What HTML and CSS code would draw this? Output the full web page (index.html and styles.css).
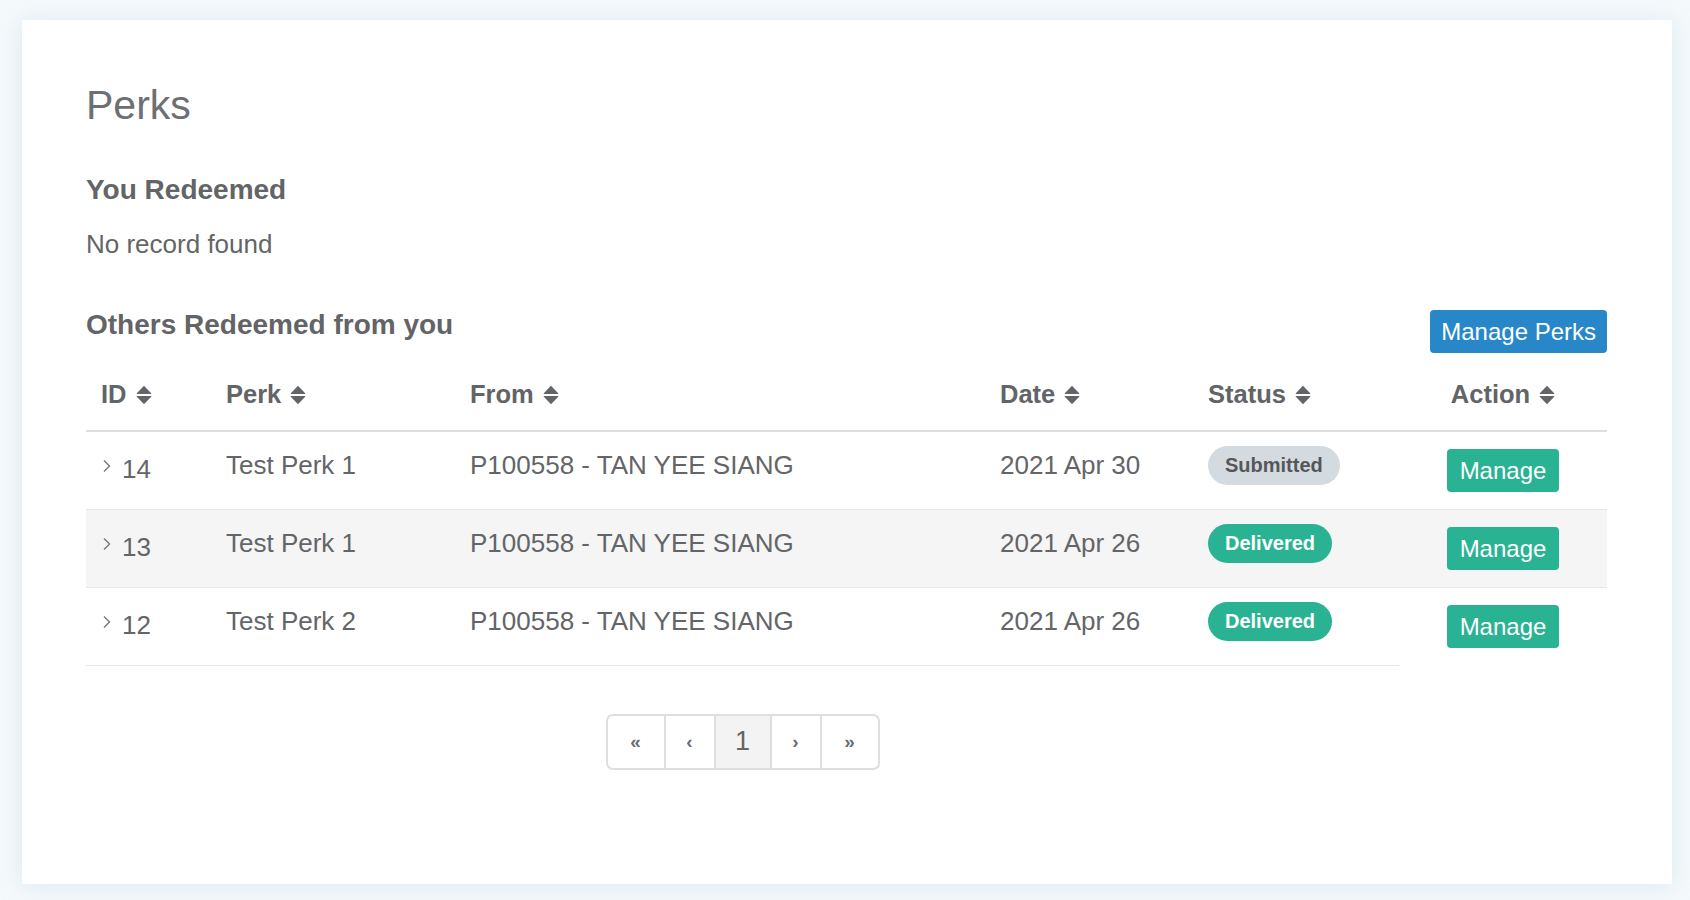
FILE: index.html
```html
<!DOCTYPE html>
<html lang="en">
<head>
<meta charset="utf-8">
<title>Perks</title>
<link rel="stylesheet" href="styles.css">
</head>
<body>
<div class="card">
  <h1 class="page-title">Perks</h1>

  <h4 class="section-title">You Redeemed</h4>
  <p class="empty">No record found</p>

  <div class="section-bar">
    <h4 class="section-title">Others Redeemed from you</h4>
    <button class="btn btn-blue">Manage Perks</button>
  </div>

  <table class="perk-table">
    <colgroup>
      <col class="c-id"><col class="c-perk"><col class="c-from"><col class="c-date"><col class="c-status"><col class="c-action">
    </colgroup>
    <thead>
      <tr>
        <th>ID<svg class="sort" viewBox="0 0 16 20"><path d="M8 0.8 L15.2 8.2 Q15.6 8.9 14.8 8.9 H1.2 Q0.4 8.9 0.8 8.2 Z"/><path d="M1.2 11.1 H14.8 Q15.6 11.1 15.2 11.8 L8 19.2 L0.8 11.8 Q0.4 11.1 1.2 11.1 Z"/></svg></th>
        <th>Perk<svg class="sort" viewBox="0 0 16 20"><path d="M8 0.8 L15.2 8.2 Q15.6 8.9 14.8 8.9 H1.2 Q0.4 8.9 0.8 8.2 Z"/><path d="M1.2 11.1 H14.8 Q15.6 11.1 15.2 11.8 L8 19.2 L0.8 11.8 Q0.4 11.1 1.2 11.1 Z"/></svg></th>
        <th>From<svg class="sort" viewBox="0 0 16 20"><path d="M8 0.8 L15.2 8.2 Q15.6 8.9 14.8 8.9 H1.2 Q0.4 8.9 0.8 8.2 Z"/><path d="M1.2 11.1 H14.8 Q15.6 11.1 15.2 11.8 L8 19.2 L0.8 11.8 Q0.4 11.1 1.2 11.1 Z"/></svg></th>
        <th>Date<svg class="sort" viewBox="0 0 16 20"><path d="M8 0.8 L15.2 8.2 Q15.6 8.9 14.8 8.9 H1.2 Q0.4 8.9 0.8 8.2 Z"/><path d="M1.2 11.1 H14.8 Q15.6 11.1 15.2 11.8 L8 19.2 L0.8 11.8 Q0.4 11.1 1.2 11.1 Z"/></svg></th>
        <th>Status<svg class="sort" viewBox="0 0 16 20"><path d="M8 0.8 L15.2 8.2 Q15.6 8.9 14.8 8.9 H1.2 Q0.4 8.9 0.8 8.2 Z"/><path d="M1.2 11.1 H14.8 Q15.6 11.1 15.2 11.8 L8 19.2 L0.8 11.8 Q0.4 11.1 1.2 11.1 Z"/></svg></th>
        <th class="center">Action<svg class="sort" viewBox="0 0 16 20"><path d="M8 0.8 L15.2 8.2 Q15.6 8.9 14.8 8.9 H1.2 Q0.4 8.9 0.8 8.2 Z"/><path d="M1.2 11.1 H14.8 Q15.6 11.1 15.2 11.8 L8 19.2 L0.8 11.8 Q0.4 11.1 1.2 11.1 Z"/></svg></th>
      </tr>
    </thead>
    <tbody>
      <tr>
        <td class="id"><svg class="chev" viewBox="0 0 10 14"><path d="M3 1.5 L8.5 7 L3 12.5"/></svg>14</td>
        <td>Test Perk 1</td>
        <td>P100558 - TAN YEE SIANG</td>
        <td>2021 Apr 30</td>
        <td><span class="badge badge-grey">Submitted</span></td>
        <td class="center"><button class="btn btn-green">Manage</button></td>
      </tr>
      <tr class="striped">
        <td class="id"><svg class="chev" viewBox="0 0 10 14"><path d="M3 1.5 L8.5 7 L3 12.5"/></svg>13</td>
        <td>Test Perk 1</td>
        <td>P100558 - TAN YEE SIANG</td>
        <td>2021 Apr 26</td>
        <td><span class="badge badge-green">Delivered</span></td>
        <td class="center"><button class="btn btn-green">Manage</button></td>
      </tr>
      <tr class="last">
        <td class="id"><svg class="chev" viewBox="0 0 10 14"><path d="M3 1.5 L8.5 7 L3 12.5"/></svg>12</td>
        <td>Test Perk 2</td>
        <td>P100558 - TAN YEE SIANG</td>
        <td>2021 Apr 26</td>
        <td><span class="badge badge-green">Delivered</span></td>
        <td class="center no-line"><button class="btn btn-green">Manage</button></td>
      </tr>
    </tbody>
  </table>

  <div class="pager-wrap">
    <ul class="pager">
      <li class="pg pg-wide">&laquo;</li>
      <li class="pg">&lsaquo;</li>
      <li class="pg pg-active">1</li>
      <li class="pg">&rsaquo;</li>
      <li class="pg pg-wide">&raquo;</li>
    </ul>
  </div>
</div>
</body>
</html>
```

FILE: styles.css
```css
html, body {
  margin: 0;
  padding: 0;
  background: #f5f9fb;
}

body {
  font-family: "Liberation Sans", Arial, sans-serif;
  color: #636568;
  padding: 20px 18px 16px 22px;
}

.card {
  background: #ffffff;
  height: 864px;
  box-sizing: border-box;
  padding: 62px 65px 0 64px;
  box-shadow: 0 2px 22px rgba(170, 205, 218, 0.35);
}

.page-title {
  margin: 0;
  font-size: 41px;
  line-height: 46px;
  font-weight: 400;
  color: #6d7073;
}

.section-title {
  margin: 0;
  font-size: 28px;
  line-height: 30px;
  font-weight: 700;
  color: #626467;
}

.page-title + .section-title {
  margin-top: 47px;
}

.empty {
  margin: 21px 0 0;
  font-size: 26px;
  line-height: 36px;
}

.section-bar {
  margin-top: 48px;
  display: flex;
  justify-content: space-between;
  align-items: flex-start;
}

.btn {
  border: 0;
  font-family: "Liberation Sans", Arial, sans-serif;
  font-size: 24px;
  color: #ffffff;
  height: 43px;
  border-radius: 4px;
  padding: 0 12px;
  white-space: nowrap;
  cursor: pointer;
}

.btn-blue {
  background: #2887c8;
  padding: 0 11px;
}

.btn-green {
  background: #29b392;
  width: 112px;
  margin-top: 2px;
}

.perk-table {
  margin-top: 8px;
  width: 100%;
  border-collapse: collapse;
  table-layout: fixed;
  font-size: 26px;
  line-height: 36px;
}

.c-id { width: 125px; }
.c-perk { width: 244px; }
.c-from { width: 530px; }
.c-date { width: 208px; }
.c-status { width: 206px; }
.c-action { width: 208px; }

.perk-table th {
  text-align: left;
  font-size: 25.5px;
  font-weight: 700;
  padding: 15px 15px 18px;
  border-bottom: 2px solid #dddddd;
  color: #626467;
  white-space: nowrap;
}

.perk-table th.center,
.perk-table td.center {
  text-align: center;
}

.sort {
  width: 16px;
  height: 20px;
  margin-left: 9px;
  vertical-align: -2px;
  fill: #626467;
}

.perk-table td {
  padding: 15px 15px 17px;
  vertical-align: top;
  border-top: 1px solid #e4e8eb;
  white-space: nowrap;
}

.perk-table tbody tr:first-child td {
  border-top: 0;
}

.perk-table tr.striped td {
  background: #f5f5f5;
}

.perk-table tr.last td {
  border-bottom: 1px solid #e4e8eb;
}

.perk-table tr.last td.no-line {
  border-bottom: 0;
}

.perk-table td.id {
  padding-top: 19px;
}

.chev {
  width: 10px;
  height: 14px;
  margin-right: 11px;
  vertical-align: top;
  margin-top: 8px;
  fill: none;
  stroke: #75787b;
  stroke-width: 1.4;
}

.badge {
  display: inline-block;
  vertical-align: top;
  margin-top: -1px;
  height: 39px;
  line-height: 39px;
  padding: 0 17px;
  border-radius: 20px;
  font-size: 20px;
  font-weight: 700;
}

.badge-grey {
  background: #d4dbe0;
  color: #555759;
}

.badge-green {
  background: #29b392;
  color: #ffffff;
}

.pager-wrap {
  width: 1313px;
  margin-top: 48px;
  display: flex;
  justify-content: center;
}

.pager {
  list-style: none;
  margin: 0;
  padding: 0;
  display: flex;
  border: 2px solid #dedede;
  border-radius: 7px;
  overflow: hidden;
}

.pg {
  width: 48px;
  height: 52px;
  display: flex;
  align-items: center;
  justify-content: center;
  font-size: 19px;
  font-weight: 700;
  color: #6a6c6f;
  border-left: 2px solid #dedede;
}

.pg:first-child {
  border-left: 0;
}

.pg-wide {
  width: 56px;
}

.pg-active {
  width: 54px;
  background: #f3f3f3;
  font-size: 27px;
  font-weight: 400;
  color: #636568;
}
```
